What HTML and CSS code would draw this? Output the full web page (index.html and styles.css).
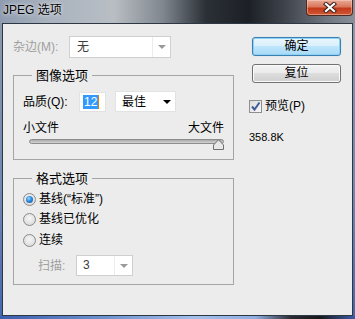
FILE: index.html
```html
<!DOCTYPE html>
<html lang="zh">
<head>
<meta charset="utf-8">
<title>JPEG 选项</title>
<link rel="stylesheet" href="styles.css">
</head>
<body>
<div class="window">
  <div class="titlebar">
    <span class="title">JPEG 选项</span>
    <div class="close">
      <svg width="14" height="11" viewBox="0 0 14 11">
        <path d="M3 2 L11 9 M11 2 L3 9" stroke="#3a2420" stroke-width="4.2" stroke-linecap="square"/>
        <path d="M3 2 L11 9 M11 2 L3 9" stroke="#ffffff" stroke-width="2.2" stroke-linecap="square"/>
      </svg>
    </div>
  </div>
  <div class="client">
    <div class="left">
      <div class="matte-row">
        <span class="matte-label disabled">杂边(M):</span>
        <div class="combo matte-combo">
          <span class="combo-text">无</span>
          <span class="combo-btn"><span class="tri gray"></span></span>
        </div>
      </div>

      <div class="group g1">
        <div class="legend">图像选项</div>
        <div class="quality-row">
          <span class="q-label">品质(Q):</span>
          <div class="q-input"><span class="sel">12</span><span class="caret"></span></div>
          <div class="q-select"><span class="q-select-text">最佳</span><span class="tri black"></span></div>
        </div>
        <div class="size-labels"><span>小文件</span><span>大文件</span></div>
        <div class="slider">
          <div class="track"></div>
          <svg class="thumb" width="11" height="11" viewBox="0 0 11 11">
            <path d="M0.5 10.5 L0.5 6 L5.5 0.8 L10.5 6 L10.5 10.5 Z" fill="#e8e8e8" stroke="#707070" stroke-width="1"/>
          </svg>
        </div>
      </div>

      <div class="group g2">
        <div class="legend">格式选项</div>
        <div class="radio-row r1"><span class="radio checked"></span><span>基线(“标准”)</span></div>
        <div class="radio-row r2"><span class="radio"></span><span>基线已优化</span></div>
        <div class="radio-row r3"><span class="radio"></span><span>连续</span></div>
        <div class="scan-row">
          <span class="scan-label disabled">扫描:</span>
          <div class="combo scan-combo">
            <span class="combo-text">3</span>
            <span class="combo-btn"><span class="tri gray"></span></span>
          </div>
        </div>
      </div>
    </div>

    <div class="right">
      <div class="btn btn-default">确定</div>
      <div class="btn btn-normal">复位</div>
      <div class="check-row">
        <span class="checkbox">
          <svg width="11" height="11" viewBox="0 0 11 11">
            <path d="M2 5.5 L4.5 8.5 L9.5 1.5" fill="none" stroke="#3f5c99" stroke-width="2"/>
          </svg>
        </span>
        <span>预览(P)</span>
      </div>
      <div class="filesize">358.8K</div>
    </div>
  </div>
  <div class="bottom-frame"></div>
</div>
</body>
</html>
```
FILE: styles.css
```css
* { box-sizing: border-box; }
html, body { margin: 0; padding: 0; }
body {
  width: 355px;
  height: 319px;
  overflow: hidden;
  font-family: "Liberation Sans", "Noto Sans CJK SC", sans-serif;
  font-size: 12px;
  color: #000;
}
.window {
  width: 355px;
  height: 319px;
  display: flex;
  flex-direction: column;
  background: linear-gradient(to bottom, #8f9aaa 0%, #7188b4 60%, #4566ae 100%);
}
.titlebar {
  height: 23px;
  flex: none;
  display: flex;
  justify-content: space-between;
  align-items: flex-start;
  background: linear-gradient(to right, #8f9cb0 0%, #a9b2be 14%, #b9bec4 32%, #80868e 46%, #2b3037 58%, #1c2026 70%, #3e434b 80%, #70767f 92%, #8a9099 100%);
}
.title {
  padding: 2px 0 0 3px;
  line-height: 16px;
  font-size: 12px;
  text-shadow: 0 0 5px rgba(255,255,255,0.8), 0 0 2px rgba(255,255,255,0.6);
}
.close {
  width: 47px;
  height: 16px;
  margin-right: 2px;
  border: 1px solid #4f2a22;
  border-top: none;
  border-radius: 0 0 4px 4px;
  background: linear-gradient(#e9a896 0%, #d9785c 45%, #c33a1a 55%, #cf5636 100%);
  box-shadow: inset 0 0 0 1px rgba(255,220,200,0.45);
  display: flex;
  align-items: center;
  justify-content: center;
}
.client {
  flex: 1;
  margin: 0 2px;
  border: 1px solid #2e3744;
  background: #ececec;
  display: flex;
}
.bottom-frame {
  height: 3px;
  flex: none;
  background: linear-gradient(to right, #3c5ead 0%, #6f93cf 30%, #a4c0ea 55%, #8eaee0 72%, #2a2c33 82%, #16181c 90%, #3d5ca5 100%);
}
.disabled { color: #a0a0a0; }

/* left column */
.left {
  width: 231px;
  padding: 12px 0 0 10px;
}
.matte-row {
  display: flex;
  align-items: center;
  height: 22px;
}
.matte-label { width: 56px; line-height: 16px; }
.combo {
  display: flex;
  align-items: stretch;
  background: #fff;
  border: 1px solid #cfcfcf;
}
.matte-combo { width: 102px; height: 22px; }
.combo-text {
  flex: 1;
  padding-left: 7px;
  line-height: 20px;
  color: #3c3c3c;
}
.combo-btn {
  width: 18px;
  border-left: 1px solid #ececec;
  display: flex;
  align-items: center;
  justify-content: center;
}
.tri {
  width: 0;
  height: 0;
  border-left: 4px solid transparent;
  border-right: 4px solid transparent;
}
.tri.gray { border-top: 4px solid #9a9a9a; }
.tri.black { border-top: 4px solid #000; }

.group {
  width: 221px;
  border: 1px solid #a5a5a5;
}
.g1 { margin-top: 17px; padding-bottom: 9px; }
.g2 { margin-top: 18px; padding-bottom: 8px; }
.legend {
  margin: -9px 0 0 18px;
  padding: 0 4px;
  width: max-content;
  background: #ececec;
  line-height: 17px;
  font-size: 13px;
}
.quality-row {
  display: flex;
  align-items: center;
  height: 21px;
  margin-top: 7px;
  padding-left: 9px;
}
.q-label { width: 56px; line-height: 16px; }
.q-input {
  width: 27px;
  height: 20px;
  background: #fff;
  border: 1px solid #e2e2e2;
  display: flex;
  align-items: center;
  padding-left: 3px;
}
.sel {
  background: #3399ff;
  color: #fff;
  line-height: 14px;
  padding: 0 1px;
}
.caret {
  width: 1px;
  height: 14px;
  background: #e07a10;
}
.q-select {
  width: 61px;
  height: 21px;
  margin-left: 9px;
  background: #fff;
  border: 1px solid #e2e2e2;
  display: flex;
  align-items: center;
  justify-content: space-between;
  padding: 0 4px 0 6px;
}
.q-select-text { line-height: 16px; }
.size-labels {
  display: flex;
  justify-content: space-between;
  margin-top: 8px;
  padding: 0 9px;
  line-height: 16px;
}
.slider {
  position: relative;
  height: 11px;
  margin: 0 9px 0 15px;
}
.track {
  margin-top: 3px;
  height: 5px;
  border-radius: 3px;
  border: 1px solid #8c8c8c;
  background: linear-gradient(#a8a8a8, #d4d4d4);
}
.thumb {
  position: absolute;
  right: 0;
  top: 0;
}
.radio-row {
  display: flex;
  align-items: center;
  height: 20px;
  padding-left: 9px;
  gap: 3px;
  line-height: 16px;
}
.r1 { margin-top: 2px; }
.r3 { margin-top: 1px; }
.radio {
  width: 13px;
  height: 13px;
  border-radius: 50%;
  border: 1px solid #8a8a8a;
  background: radial-gradient(circle at 50% 40%, #f6f6f6 0%, #e2e2e2 60%, #cfcfcf 100%);
  display: flex;
  align-items: center;
  justify-content: center;
}
.radio.checked::after {
  content: "";
  width: 7px;
  height: 7px;
  border-radius: 50%;
  background: radial-gradient(circle at 40% 35%, #9ad6ff 0%, #2a8ae0 45%, #16508f 100%);
}
.scan-row {
  display: flex;
  align-items: center;
  margin-top: 5px;
  padding-left: 24px;
}
.scan-label { width: 38px; line-height: 16px; }
.scan-combo { width: 57px; height: 21px; }
.scan-combo .combo-text { padding-left: 6px; line-height: 19px; }

/* right column */
.right {
  flex: 1;
  padding: 13px 0 0 15px;
}
.btn {
  width: 89px;
  height: 19px;
  margin-left: 3px;
  border-radius: 3px;
  text-align: center;
  line-height: 17px;
}
.btn-default {
  border: 1px solid #3c7fb1;
  background: linear-gradient(#eaf6fd 0%, #d9f0fc 45%, #bee6fd 50%, #a7d9f5 100%);
  box-shadow: inset 0 0 0 1px #8fd0f5, 0 0 1px #8fc8ee;
}
.btn-normal {
  margin-top: 8px;
  border: 1px solid #707070;
  background: linear-gradient(#f2f2f2 0%, #ebebeb 45%, #dddddd 50%, #cfcfcf 100%);
  box-shadow: inset 0 0 0 1px #fbfbfb;
}
.check-row {
  display: flex;
  align-items: center;
  gap: 3px;
  margin-top: 15px;
  line-height: 16px;
}
.checkbox {
  width: 13px;
  height: 13px;
  border: 1px solid #8e8f8f;
  background: linear-gradient(135deg, #dcdcdc, #f8f8f8);
  display: flex;
  align-items: center;
  justify-content: center;
}
.filesize {
  margin-top: 16px;
  font-size: 11px;
  line-height: 14px;
}
```
